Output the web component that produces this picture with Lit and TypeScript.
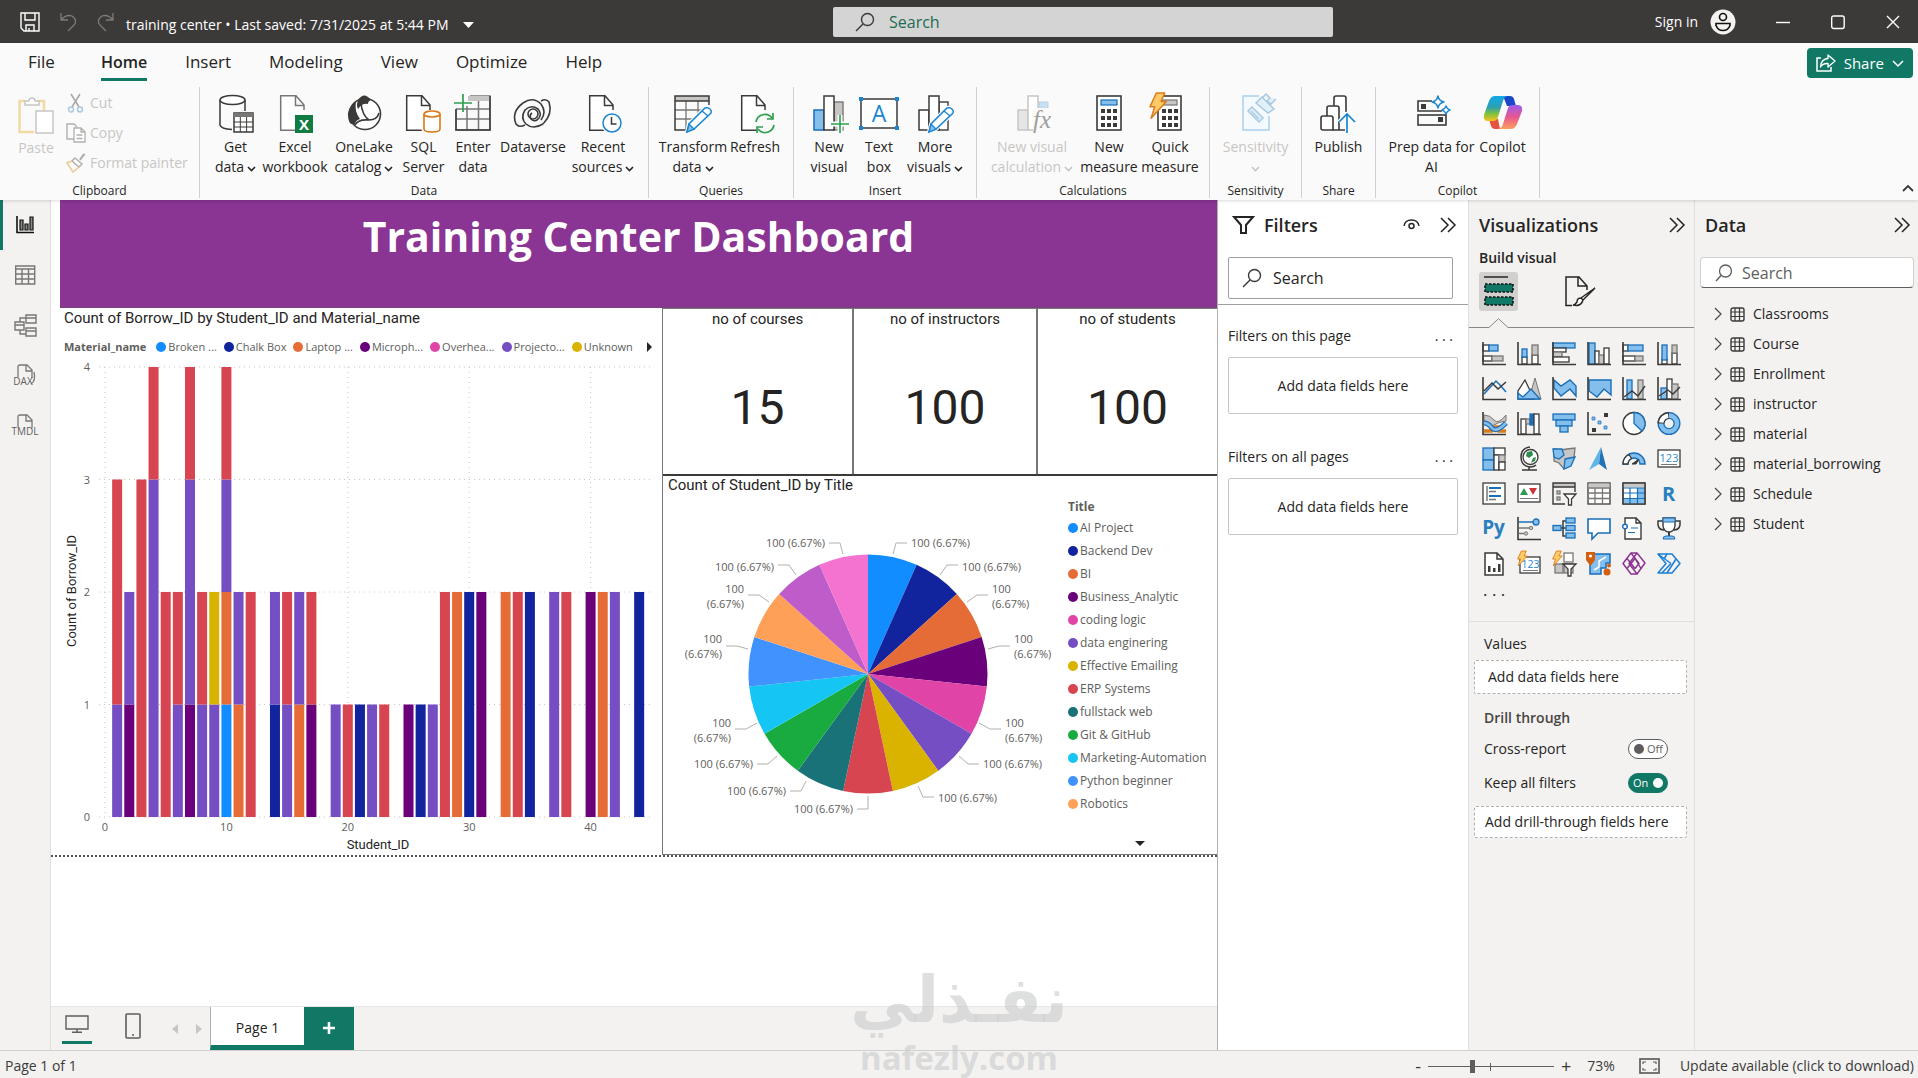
import { LitElement, html, svg, css, nothing } from "lit";
import { customElement, state } from "lit/decorators.js";

/* ---------- palette ---------- */
const K = "#3b3a39";
const G = "#797775";
const LG = "#c8c6c4";
const B = "#83beec";
const D = "#1a6fb8";
const OR = "#d97b1a";

const C = {
  blue: "#118dff",
  navy: "#12239e",
  orange: "#e66c37",
  plum: "#6b007b",
  pink: "#e044a7",
  violet: "#744ec2",
  gold: "#d9b300",
  red: "#d64550",
};

/* ---------- icon helpers ---------- */
const box = (w: number, h: number, body: unknown, cls = "ic") =>
  html`<svg class=${cls} width=${w} height=${h} viewBox="0 0 ${w} ${h}" fill="none" aria-hidden="true">${body}</svg>`;

const chevDown = (c = "currentColor") =>
  box(9, 6, svg`<path d="M1 1l3.5 3.5L8 1" stroke=${c} stroke-width="1.6"/>`, "caret");
const chevRight2 = () =>
  box(17, 16, svg`<path d="M1 1l7 7-7 7M8 1l7 7-7 7" stroke="#252423" stroke-width="1.5"/>`);
const magnifier = (c = K) =>
  box(20, 20, svg`<circle cx="12.5" cy="7.5" r="6" stroke=${c} stroke-width="1.4"/><path d="M8 12l-7 7" stroke=${c} stroke-width="1.5"/>`);

const doc = (x: number, c = K) =>
  svg`<path d="M${x + 0.7} 1.7h15l8 9.5V36.3h-23z" fill="#fff"/><path d="M${x + 24} 16v-5l-8-9.3H${x + 0.7}v34.6h15M${x + 15.5} 2v9.5h8.5" stroke=${c} stroke-width="1.5"/>`;

const pencil = (x: number) =>
  svg`<g transform="translate(${x} 13)"><path d="M2 25l2-8L20 1q3-1 5 1t1 4L9 22z" fill="#fff" stroke="#fafafa" stroke-width="4"/><path d="M2 25l2-8L20 1q3-1 5 1t1 4L9 22z" fill="#fff" stroke="#1a86d0" stroke-width="1.5"/><path d="M2 25l2-8 5 5z" fill=${B} stroke="#1a86d0" stroke-width="1.3"/><path d="M17 4l6 5" stroke="#1a86d0" stroke-width="1.3"/></g>`;

const keypad = (x: number, y: number) =>
  [0, 1, 2].map((r) => [0, 1, 2].map((c) => svg`<rect x=${x + c * 6} y=${y + r * 7} width="4" height="4" fill=${K}/>`));

const bolt = (x: number, y: number, s: number) =>
  svg`<path transform="translate(${x} ${y}) scale(${s})" d="M7 0h8l-3.500 8h5L2 24l3.500-11H1z" fill="#ffc966" stroke=${OR} stroke-width="1.400" stroke-linejoin="round"/>`;

const paste = box(36, 38, svg`<path d="M7 5H1.500v31H16" stroke="#f3d9a4" stroke-width="2.500"/><path d="M20 5h6v10" stroke="#f3d9a4" stroke-width="2.500"/><path d="M7 9V5h4a3 3 0 0 1 6 0h4v4z" fill="#fff" stroke=${LG} stroke-width="1.500"/><rect x="18" y="15" width="17" height="22" fill="#fff" stroke=${LG} stroke-width="1.500"/>`);
const cut = box(18, 20, svg`<path d="M4 1l8 13M13 1L5 14" stroke="#a9a7a5" stroke-width="1.500"/><circle cx="4" cy="16.500" r="2.500" stroke="#a6c8e4" stroke-width="1.400"/><circle cx="13" cy="16.500" r="2.500" stroke="#a6c8e4" stroke-width="1.400"/>`);
const copy = box(20, 20, svg`<path d="M8 16H1V1h7l3 3" stroke="#b3b0ad" stroke-width="1.400"/><path d="M8 5h7l4 4v10H8zM15 5v4h4M10.500 12h6M10.500 15.500h6" fill="#fff" stroke="#b3b0ad" stroke-width="1.300"/>`);
const brush = box(20, 20, svg`<path d="M19 1l-5 5M9 5l7 6-3 3-7-6z" stroke="#b3b0ad" stroke-width="1.500" fill="#fff"/><path d="M6 8L1 10l6 9 6-5" stroke="#eccb98" stroke-width="1.600"/><path d="M14 7l4-6" stroke="#b3b0ad" stroke-width="2"/>`);

const I: Record<string, unknown> = {
  getData: svg`<path d="M4 6v25q1 4 12 4.500M29 6v11" stroke=${K} stroke-width="1.500"/><ellipse cx="16.500" cy="6" rx="12.500" ry="4.500" fill="#fff" stroke=${K} stroke-width="1.500"/><rect x="18" y="19" width="19" height="19" fill="#fff" stroke=${K} stroke-width="1.500"/><path d="M18 19h19v4H18z" fill=${G}/><path d="M18 28h19M18 33h19M24.300 23v15M30.600 23v15" stroke=${K}/>`,
  excel: svg`${doc(5, G)}<rect x="20" y="21" width="18" height="18" fill="#107c41"/><text x="29" y="36" font-size="15" font-weight="700" fill="#fff" text-anchor="middle">X</text>`,
  onelake: svg`<circle cx="21" cy="20" r="15.500" fill="#fff" stroke=${K} stroke-width="1.600"/><path d="M14 6q6-9 13 0-3 1-3 4-6-1-10 5-2-4 0-9z" fill=${K}/><path d="M12 8Q1 15 5 27q1 4 6 3 1-4 5-5-6-8-4-17z" fill=${K}/><path d="M17 9q1 12 8 17 8 0 10-7M11 31q3-6 14-5" stroke=${K} stroke-width="1.600"/>`,
  sql: svg`${doc(2)}<path d="M20 20v15q0 3 8 3t8-3V20" fill="#fff" stroke="#fafafa" stroke-width="4"/><path d="M20 20v15q0 3 8 3t8-3V20" fill="#fff" stroke=${OR} stroke-width="1.600"/><ellipse cx="28" cy="20" rx="8" ry="3" fill="#fff" stroke=${OR} stroke-width="1.600"/>`,
  enter: svg`<path d="M3 15v21h34V2H17M3 15h34M3 25h34M14 12v24M25.500 7v29" stroke=${G} stroke-width="1.500"/><path d="M15 2h22v5H15z" fill=${LG}/><path d="M37 2v34H3V15" stroke=${K} stroke-width="1.500"/><path d="M1 9h18M10 0v18" stroke="#2e9e4f" stroke-width="1.700"/>`,
  dataverse: svg`<g transform="translate(0 4)" stroke=${K} stroke-width="1.600"><path d="M30 26q-10 6-17 0-6-6-1-14 6-6 13-1 4 5 1 9-4 5-8 1-2-4 1-6"/><path d="M10 5Q-2 14 3 26q3 4 9 1"/><path d="M10 5q10-7 18 1 6 8 0 16"/><path d="M30 26Q40 16 36 4q-3-4-8-1"/><circle cx="20" cy="16" r="5"/></g>`,
  recent: svg`${doc(6)}<circle cx="29" cy="29" r="9" fill="#fff" stroke="#fafafa" stroke-width="4"/><circle cx="29" cy="29" r="9" fill="#fff" stroke="#1a86d0" stroke-width="1.500"/><path d="M28.500 23v7h5" stroke=${K} stroke-width="1.500"/>`,
  transform: svg`<rect x="2" y="2" width="34" height="5" fill=${LG}/><path d="M2 16h30M2 25h20M13 7v29M25 7v18" stroke=${G} stroke-width="1.300"/><path d="M14 36H2V2h34v9M2 7h34" stroke=${K} stroke-width="1.500"/>${pencil(12)}`,
  refresh: svg`${doc(6)}<circle cx="30" cy="29" r="11" fill="#fafafa"/><path d="M21 28a9 9 0 0 1 16-4M38 19v6h-6M39 31a9 9 0 0 1-16 4M22 39v-6h6" stroke="#2e9e4f" stroke-width="1.700"/>`,
  newVisual: svg`<rect x="5" y="16" width="10" height="20" fill=${B} stroke=${D} stroke-width="1.500"/><rect x="25" y="8" width="9" height="28" fill=${LG} stroke=${G} stroke-width="1.400"/><rect x="15" y="2" width="10" height="34" fill="#fff" stroke=${K} stroke-width="1.500"/><path d="M22 30h18M31 21v18" stroke="#fafafa" stroke-width="5"/><path d="M22 30h18M31 21v18" stroke="#2e9e4f" stroke-width="1.600"/>`,
  textBox: svg`<rect x="2" y="5" width="36" height="29" fill="#fff" stroke=${K} stroke-width="1.500"/><path d="M0 3h4v4H0zM36 3h4v4h-4zM0 32h4v4H0zM36 32h4v4h-4z" fill="#1a86d0"/><text x="20" y="28" font-size="23" fill="#1a86d0" text-anchor="middle">A</text>`,
  moreVisuals: svg`<rect x="4" y="16" width="10" height="20" fill="#fff" stroke=${K} stroke-width="1.500"/><rect x="24" y="8" width="9" height="28" fill="#fff" stroke=${K} stroke-width="1.400"/><rect x="14" y="2" width="10" height="34" fill="#fff" stroke=${K} stroke-width="1.500"/>${pencil(12)}`,
  visualCalc: svg`<g><rect x="6" y="16" width="10" height="20" fill="#e8e6e4" stroke=${LG} stroke-width="1.500"/><path d="M27 8h9v6h-9z" fill="#c9dff0" stroke="#b4d2ea"/><rect x="16" y="2" width="10" height="34" fill="#fff" stroke=${LG} stroke-width="1.500"/><rect x="21" y="14" width="20" height="24" fill="#fafafa"/><text class="fx" x="21" y="34" font-size="25" font-style="italic" fill="#a19f9d">fx</text></g>`,
  measure: svg`<rect x="8" y="2" width="24" height="34" fill="#fff" stroke=${K} stroke-width="1.600"/><rect x="12" y="6" width="16" height="5" fill=${B} stroke=${D} stroke-width="1.200"/>${keypad(12, 15)}`,
  quick: svg`<rect x="8" y="2" width="23" height="34" fill="#fff" stroke=${K} stroke-width="1.600"/><rect x="12" y="6" width="15" height="5" fill=${LG} stroke=${G} stroke-width="1.200"/>${keypad(12, 15)}${bolt(-1, -1, 1.05)}`,
  sensitivity: svg`<path d="M23 2H7v34h26V22" fill="#f4f9fd" stroke="#a9d0ec" stroke-width="1.500"/><g stroke="#a9c9e2" stroke-width="1.500" fill="#e1eff9"><path d="M12 17l4-4 11 11-4 4z"/><path d="M15 17l8 8" /><path d="M20 9l6-6 12 12-6 4zM27 3l3-3 4 4-3 3 4 3 5-5"/></g>`,
  publish: svg`<g stroke=${K} stroke-width="1.600" fill="#fff"><path d="M15 12V4q0-2 2-2h8q2 0 2 2v14"/><path d="M8 22v-8q0-2 2-2h8q2 0 2 2v22"/><path d="M2 24q0-2 2-2h8q2 0 2 2v12H4q-2 0-2-2z"/></g><path d="M14 36h12" stroke=${K} stroke-width="1.500"/><path d="M28 39V20M20 28l8-8 8 8" stroke="#fafafa" stroke-width="4"/><path d="M28 39V20M20 28l8-8 8 8" stroke="#1a86d0" stroke-width="1.700"/>`,
  prep: svg`<path d="M20 7H6v10h24" stroke=${K} stroke-width="1.600"/><path d="M9 10h5v5H9z" fill=${K}/><rect x="6" y="21" width="28" height="10" stroke=${K} stroke-width="1.600"/><path d="M26 23h5v5h-5z" fill=${K}/><path d="M26 2q1 5 6 6-5 1-6 6-1-5-6-6 5-1 6-6zM34 12q1 3 4 4-3 1-4 4-1-3-4-4 3-1 4-4z" stroke="#1a86d0" stroke-width="1.400" stroke-linejoin="round"/>`,
  copilot: svg`<defs><linearGradient id="ca" x1="0" y1="0" x2="0" y2="1"><stop offset="0" stop-color="#0fa8e8"/><stop offset=".45" stop-color="#2e9fb0"/><stop offset=".7" stop-color="#7cc142"/><stop offset="1" stop-color="#f6c318"/></linearGradient><linearGradient id="cb" x1="0" y1="0" x2="0" y2="1"><stop offset="0" stop-color="#9a5cf0"/><stop offset=".5" stop-color="#e9568f"/><stop offset="1" stop-color="#fba05c"/></linearGradient></defs><path d="M20 2h7q3 0 4 3l2 7h-9z" fill="#1b48c8"/><path d="M17 35h-5q-3 0-4-3l-2-7h9z" fill="#e5533c"/><path d="M12 2h12q-3 1-4 5l-5 16q-1 4-5 4H5q-5 0-4-6L6 7q2-5 6-5z" fill="url(#ca)"/><path d="M28 35H15q4-1 5-5l5-16q1-3 5-3h5q5 0 4 6l-5 13q-2 5-6 5z" fill="url(#cb)"/>`,
};

interface Cmd { icon: string; lines: string[]; w: number; drop?: boolean; off?: boolean }
interface Group { name: string; w: number; cmds: Cmd[] }

const GROUPS: Group[] = [
  { name: "Data", w: 449, cmds: [
    { icon: "getData", lines: ["Get", "data"], w: 49, drop: true },
    { icon: "excel", lines: ["Excel", "workbook"], w: 70 },
    { icon: "onelake", lines: ["OneLake", "catalog"], w: 68, drop: true },
    { icon: "sql", lines: ["SQL", "Server"], w: 51 },
    { icon: "enter", lines: ["Enter", "data"], w: 48 },
    { icon: "dataverse", lines: ["Dataverse"], w: 72 },
    { icon: "recent", lines: ["Recent", "sources"], w: 68, drop: true },
  ] },
  { name: "Queries", w: 145, cmds: [
    { icon: "transform", lines: ["Transform", "data"], w: 68, drop: true },
    { icon: "refresh", lines: ["Refresh"], w: 56 },
  ] },
  { name: "Insert", w: 183, cmds: [
    { icon: "newVisual", lines: ["New", "visual"], w: 48 },
    { icon: "textBox", lines: ["Text", "box"], w: 52 },
    { icon: "moreVisuals", lines: ["More", "visuals"], w: 60, drop: true },
  ] },
  { name: "Calculations", w: 233, cmds: [
    { icon: "visualCalc", lines: ["New visual", "calculation"], w: 92, drop: true, off: true },
    { icon: "measure", lines: ["New", "measure"], w: 62 },
    { icon: "quick", lines: ["Quick", "measure"], w: 60 },
  ] },
  { name: "Sensitivity", w: 92, cmds: [{ icon: "sensitivity", lines: ["Sensitivity", ""], w: 76, drop: true, off: true }] },
  { name: "Share", w: 74, cmds: [{ icon: "publish", lines: ["Publish"], w: 56 }] },
  { name: "Copilot", w: 164, cmds: [
    { icon: "prep", lines: ["Prep data for", "AI"], w: 90 },
    { icon: "copilot", lines: ["Copilot"], w: 52 },
  ] },
];

/* ---------- visual gallery icons, 24 x 24 ---------- */
const ax = svg`<path d="M1 0v22.500h23" stroke=${K} stroke-width="1.600"/>`;
const r = (x: number, y: number, w: number, h: number, f: string, s: string) =>
  svg`<rect x=${x} y=${y} width=${w} height=${h} fill=${f} stroke=${s} stroke-width="1.300"/>`;
const W = "#fff";
const GALLERY: [string, unknown][] = [
  ["Stacked bar chart", svg`${r(1, 3, 6, 6, W, K)}${r(7, 3, 9, 6, B, D)}${r(1, 14, 9, 5, W, K)}${r(10, 14, 11, 5, LG, G)}${ax}`],
  ["Stacked column chart", svg`${r(5, 15, 5, 7, W, K)}${r(5, 7, 5, 8, B, D)}${r(15, 13, 6, 9, W, K)}${r(15, 3, 6, 10, LG, G)}${ax}`],
  ["Clustered bar chart", svg`${r(1, 1, 22, 5, B, D)}${r(1, 6, 13, 4, W, K)}${r(1, 10, 9, 5, LG, G)}${r(1, 15, 16, 5, W, K)}${ax}`],
  ["Clustered column chart", svg`${r(2, 1, 6, 21, B, D)}${r(8, 9, 4, 13, W, K)}${r(12, 13, 5, 9, LG, G)}${r(17, 6, 5, 16, W, K)}${ax}`],
  ["100% stacked bar chart", svg`${r(1, 3, 5, 6, W, K)}${r(6, 3, 15, 6, B, D)}${r(1, 14, 12, 5, W, K)}${r(13, 14, 8, 5, LG, G)}${ax}`],
  ["100% stacked column chart", svg`${r(5, 17, 5, 5, W, K)}${r(5, 3, 5, 15, B, D)}${r(15, 11, 5, 11, W, K)}${r(15, 3, 5, 8, LG, G)}${ax}`],
  ["Line chart", svg`<path d="M2 17L14 4l4 4 6 7" stroke=${D} stroke-width="1.500"/><path d="M2 14l8-8 6 6 8-7" stroke=${K} stroke-width="1.500"/>${ax}`],
  ["Area chart", svg`<path d="M12 22L18 1l6 21z" fill=${LG} stroke=${G}/><path d="M1 22V14L8 3l9 19z" fill=${W} stroke=${K} stroke-width="1.300"/><path d="M1 22v-6l5 4 8-8 9 10z" fill=${B} stroke=${D} stroke-width="1.300"/>`],
  ["Stacked area chart", svg`<path d="M2 3l7 6 9-6 6 6v10l-6-7-9 7-7-8z" fill=${B} stroke=${D} stroke-width="1.400"/>${ax}`],
  ["100% stacked area chart", svg`<path d="M2 3h22v15l-7-6-7 8-8-6z" fill=${B} stroke=${D} stroke-width="1.400"/>${ax}`],
  ["Line and stacked column chart", svg`${r(5, 3, 5, 19, B, D)}${r(16, 3, 5, 19, LG, G)}<path d="M2 20l8-6 6 5 7-10" stroke=${K} stroke-width="1.400"/>${ax}`],
  ["Line and clustered column chart", svg`${r(4, 11, 6, 11, B, D)}${r(10, 2, 5, 20, W, K)}${r(15, 7, 6, 15, LG, G)}<path d="M2 19l9-6 5 4 7-7" stroke=${K} stroke-width="1.400"/>${ax}`],
  ["Ribbon chart", svg`<path d="M2 3q6 0 10 5t12-5v6q-8 1-12 4T2 8z" fill=${LG} stroke=${G}/><path d="M2 19h7v-4h8v4h7" stroke=${OR} stroke-width="3.500"/><path d="M2 11q4 0 8 5t14-5" stroke=${D} stroke-width="5"/><path d="M2 11q4 0 8 5t14-5" stroke=${B} stroke-width="2.500"/>${ax}`],
  ["Waterfall chart", svg`${r(4, 7, 5, 15, W, K)}${r(9, 7, 4, 5, LG, G)}${r(13, 2, 4, 11, D, D)}${r(17, 2, 5, 20, W, K)}${ax}`],
  ["Funnel", svg`${r(1, 2, 22, 6, B, D)}${r(4, 8, 16, 6, B, D)}${r(8, 14, 8, 6, B, D)}`],
  ["Scatter chart", svg`<path d="M17 1h4v4h-4zM5 16h4v4H5z" fill=${K}/><path d="M5 5h3v3H5zM11 9h3v3h-3zM17 14h3v3h-3z" fill=${B} stroke=${D} stroke-width=".7"/>${ax}`],
  ["Pie chart", svg`<circle cx="12" cy="11.500" r="11" fill=${W} stroke=${K} stroke-width="1.400"/><path d="M12 .5a11 11 0 0 1 8 18.500L12 11.500z" fill=${B} stroke=${D} stroke-width="1.300"/>`],
  ["Donut chart", svg`<circle cx="12" cy="11.500" r="8" stroke=${D} stroke-width="7"/><circle cx="12" cy="11.500" r="8" stroke=${B} stroke-width="4.500"/><path d="M4 11.500a8 8 0 0 1 8-8" stroke=${K} stroke-width="7"/><path d="M4.200 10.500a8 8 0 0 1 7-6.800" stroke=${W} stroke-width="4.500"/>`],
  ["Treemap", svg`${r(1, 1, 11, 12, B, D)}${r(1, 13, 11, 10, B, D)}${r(12, 1, 11, 7, W, K)}${r(12, 8, 5, 15, W, K)}${r(17, 8, 6, 7, LG, G)}${r(17, 15, 6, 8, W, K)}`],
  ["Map", svg`<circle cx="13.500" cy="10" r="7.500" fill=${W} stroke=${K} stroke-width="1.300"/><path d="M10 5l5-1 1 4-4 3-3-2zM16 11l3-1-1 4-4 2z" fill="#2c8c4b"/><path d="M13 0Q4 1 4 10t9 10q4 0 6-2M12 20v3M5 23h15" stroke=${K} stroke-width="1.500"/>`],
  ["Filled map", svg`<path d="M2 2l7 1 6-1 8-1-1 10-4 8-6 3-5-6-5-2z" fill=${LG} stroke=${G} stroke-width="1.300"/><path d="M1 2h9l2 6-5 4-5-2zM13 12l10-2-4 9-7 3z" fill=${B} stroke=${D} stroke-width="1.300"/>`],
  ["Azure map", svg`<path d="M14 0L2 23l10-6z" fill="#5fb4ea"/><path d="M14 0l6 23-8-6z" fill="#2273b5"/>`],
  ["Gauge", svg`<path d="M1 17a11 11 0 0 1 22 0h-5a6 6 0 0 0-12 0z" fill=${B} stroke=${D} stroke-width="1.400"/><path d="M1 17a11 11 0 0 1 6-9.500l2.500 4A6 6 0 0 0 6 17z" fill=${W} stroke=${K} stroke-width="1.300"/><path d="M10 17l7-5-3 5z" fill=${K} stroke=${K}/>`],
  ["Card", svg`${r(1, 3, 22, 17, W, K)}<text x="12" y="14.500" font-size="11" fill="#2a8ad0" text-anchor="middle">123</text><path d="M4 17.500h16" stroke=${G}/>`],
  ["Multi-row card", svg`${r(1, 1, 22, 21, W, K)}<path d="M5 4v15" stroke=${G} stroke-width="1.500"/><path d="M7 6h12M7 14h12" stroke=${D} stroke-width="2.200"/><path d="M7 9.500h7M7 17.500h7" stroke=${G} stroke-width="1.300"/>`],
  ["KPI", svg`${r(1, 2, 22, 18, W, K)}<path d="M3 13l4-7 4 7z" fill="#2c9c50"/><path d="M12 6h8l-4 7z" fill="#d13438"/><path d="M3 16.500h18" stroke=${G}/>`],
  ["Slicer", svg`<path d="M1 1h22v4H1z" fill=${LG}/><path d="M13 22H1V1h22v9M1 5h22" stroke=${K} stroke-width="1.400"/>${r(5, 9, 3, 3, LG, G)}${r(5, 15, 3, 3, LG, G)}<path d="M12 12h12l-4.500 5v6h-3v-6z" fill=${W} stroke=${K} stroke-width="1.300"/>`],
  ["Table", svg`${r(1, 1, 22, 21, W, K)}<path d="M1.500 1.500h21v4h-21z" fill=${LG}/><path d="M1 6h22M1 11h22M1 16.500h22M8 6v16M15.500 6v16" stroke=${G} stroke-width="1.300"/>`],
  ["Matrix", svg`${r(1, 1, 22, 21, W, K)}<path d="M1.500 1.500h21v4h-21z" fill=${LG}/><path d="M15.500 6H22v16H2v-5.500h13.500z" fill=${B}/><path d="M1 6h22M1 11h22M1 16.500h22M8 6v16M15.500 6v16" stroke=${D} stroke-width="1.200"/>${r(1, 1, 22, 21, "none", K)}`],
  ["R script visual", svg`<text x="11.500" y="19" font-size="20" font-weight="700" fill="#2a7fbf" text-anchor="middle">R</text>`],
  ["Python visual", svg`<text x="11.500" y="17" font-size="19" font-weight="700" fill="#2a7fbf" text-anchor="middle">Py</text>`],
  ["Key influencers", svg`<path d="M2 5h16" stroke=${D} stroke-width="1.500"/><circle cx="19" cy="5" r="3" fill=${B} stroke=${D} stroke-width="1.300"/><path d="M2 11h10M2 16.500h5" stroke=${G} stroke-width="1.500"/><circle cx="14" cy="11" r="1.700" fill=${LG} stroke=${G}/><circle cx="9" cy="16.500" r="1.700" fill=${LG} stroke=${G}/>${ax}`],
  ["Decomposition tree", svg`<path d="M8 11h7M14 4h-3v15h3M11 11h4" stroke=${K} stroke-width="1.500"/>${r(1, 8.5, 8, 5, B, D)}${r(14, 1, 9, 5, B, D)}${r(14, 8.5, 9, 5, B, D)}${r(14, 16, 9, 5, B, D)}`],
  ["Q&A", svg`<path d="M1 2h22v14H11l-6 6v-6H1z" fill=${W} stroke=${D} stroke-width="1.600"/>`],
  ["Narrative", svg`<path d="M3 7V1h11l5 5v16H3V12M14 1v5h5" fill=${W} stroke=${K} stroke-width="1.400"/><circle cx="3" cy="9.500" r="2.300" fill=${W} stroke=${D} stroke-width="1.400"/><path d="M9 11h7M6 15.500h7" stroke=${D} stroke-width="1.200"/>`],
  ["Metrics", svg`<path d="M6 4H1v4q1 5 6 5M18 4h5v4q-1 5-6 5" stroke=${K} stroke-width="1.500"/><path d="M6 1h12v8q-1 6-6 6T6 9z" fill=${W} stroke=${K} stroke-width="1.400"/><path d="M6 1h12v4H6z" fill=${B} stroke=${D}/><path d="M12 15v4" stroke=${K} stroke-width="2"/><path d="M6 22q0-3 3-3h6q3 0 3 3z" fill=${B} stroke=${D}/>`],
  ["Paginated report", svg`<path d="M3 1h12l6 6v16H3zM15 1v6h6" fill=${W} stroke=${K} stroke-width="1.500"/><path d="M6 14h2.500v6H6zM11 16h2.500v4H11zM16 12h2.500v8H16z" fill=${K}/>`],
  ["Card (new)", svg`${r(3, 5, 20, 16, W, K)}<text x="13.500" y="16" font-size="10.500" fill="#2a8ad0" text-anchor="middle">123</text><path d="M6 18.500h15" stroke=${G}/>${bolt(0, -1, 0.62)}`],
  ["Slicer (new)", svg`${r(12, 1, 9, 9, W, G)}${r(3, 12, 8, 9, LG, G)}${r(12, 12, 9, 9, LG, G)}<path d="M11 12h13l-5 5v7h-3v-7z" fill=${W} stroke=${K} stroke-width="1.300"/>${bolt(0, -1, 0.62)}`],
  ["ArcGIS map", svg`<path d="M3 2h20v9h-4v5h-5v6H3z" fill=${B} stroke=${D} stroke-width="1.500"/><path d="M7 18l5-3V9l7-4" stroke=${W} stroke-width="1.500"/><path d="M-1 0h9v8l-4.500 6L-1 8z" fill="#d35f0c"/><circle cx="3.500" cy="4" r="1.600" fill=${W}/><circle cx="20" cy="20" r="3.500" fill="#d35f0c"/><circle cx="22" cy="13.500" r="2" fill="#d35f0c"/>`],
  ["Power Apps", svg`<g stroke="#8a2f8f" stroke-width="1.400" stroke-linejoin="round"><path d="M9 1h6l8 10-8 11H9L1 11.500z"/><path d="M9 1l8 10.500-4 5L5 6.500M15 22L7 11.500l8-10.500M5 16.500L13 6.500l6 10"/></g>`],
  ["Power Automate", svg`<g stroke="#1a7fd4" stroke-width="1.500" stroke-linejoin="round"><path d="M1 2h14l8 9.500L15 21H1l8-9.500z"/><path d="M1 2l13 9.500M14 11.500L5 21M10 2l-3 5M19 7l-9 14"/></g>`],
];

/* ---------- chart data ---------- */
type Stack = [number, [keyof typeof C, number][]];
const STACKS: Stack[] = [
  [1, [["violet", 1], ["red", 2]]], [2, [["plum", 1], ["violet", 1]]], [3, [["red", 3]]],
  [4, [["violet", 3], ["red", 1]]], [5, [["red", 2]]], [6, [["violet", 1], ["red", 1]]],
  [7, [["plum", 1], ["violet", 2], ["red", 1]]], [8, [["violet", 1], ["red", 1]]],
  [9, [["violet", 1], ["gold", 1]]], [10, [["blue", 1], ["orange", 1], ["violet", 1], ["red", 1]]],
  [11, [["orange", 1], ["violet", 1]]], [12, [["red", 2]]], [14, [["navy", 1], ["violet", 1]]],
  [15, [["violet", 1], ["red", 1]]], [16, [["orange", 1], ["violet", 1]]], [17, [["plum", 1], ["red", 1]]],
  [19, [["violet", 1]]], [20, [["red", 1]]], [21, [["navy", 1]]], [22, [["violet", 1]]], [23, [["red", 1]]],
  [25, [["plum", 1]]], [26, [["navy", 1]]], [27, [["violet", 1]]], [28, [["red", 2]]], [29, [["orange", 2]]],
  [30, [["navy", 2]]], [31, [["plum", 2]]], [33, [["orange", 2]]], [34, [["red", 2]]], [35, [["navy", 2]]],
  [37, [["violet", 2]]], [38, [["red", 2]]], [40, [["plum", 2]]], [41, [["orange", 2]]], [42, [["violet", 2]]],
  [44, [["navy", 2]]],
];
const MATERIALS: [string, string][] = [
  ["Broken ...", C.blue], ["Chalk Box", C.navy], ["Laptop ...", C.orange], ["Microph...", C.plum],
  ["Overhea...", C.pink], ["Projecto...", C.violet], ["Unknown", C.gold],
];
const COURSES: [string, string][] = [
  ["AI Project", C.blue], ["Backend Dev", C.navy], ["BI", C.orange], ["Business_Analytic", C.plum],
  ["coding logic", C.pink], ["data enginering", C.violet], ["Effective Emailing", C.gold], ["ERP Systems", C.red],
  ["fullstack web", "#197278"], ["Git & GitHub", "#1aab40"], ["Marketing-Automation", "#15c6f4"],
  ["Python beginner", "#4092ff"], ["Robotics", "#ffa058"],
];
const SLICES = [...COURSES.map((c) => c[1]), "#be5dc9", "#f472d0"];

/* callouts: start, elbow, reach, text baseline, wrapped */
type Callout = [number, number, number, number, number, number, boolean];
const RIGHT: Callout[] = [
  [25, -120, 28, -131, 39, -127, false], [72, -99, 79, -109, 90, -103, false], [99, -72, 109, -79, 120, -81, true],
  [120, -25, 131, -28, 142, -31, true], [111, 49, 122, 55, 133, 53, true],
];
const CALLOUTS: Callout[] = [
  ...RIGHT,
  [91, 82, 100, 90, 111, 94, false], [50, 112, 55, 123, 66, 128, false], [0, 122, 0, 135, -11, 139, false],
  [-62, 107, -67, 117, -78, 121, false], [-91, 82, -100, 90, -111, 94, false],
  ...RIGHT.map(([a, b, c, d, e, f, g]): Callout => [-a, b, -c, d, -e, f, g]),
];

const TABLES = ["Classrooms", "Course", "Enrollment", "instructor", "material", "material_borrowing", "Schedule", "Student"];

@customElement("app-root")
export class AppRoot extends LitElement {
  @state() private cross = false;
  @state() private keep = true;

  static styles = css`
    :host { display: flex; flex-direction: column; min-height: 100vh; position: relative; background: #f3f2f1; color: #252423; font: 14px/20px "Open Sans", "Noto Sans", sans-serif; }
    * { box-sizing: border-box; }
    button, input { font: inherit; color: inherit; }
    button { background: none; border: 0; padding: 0; margin: 0; text-align: inherit; }
    ul, h1, h2, h3, p { margin: 0; padding: 0; list-style: none; font-weight: inherit; font-size: inherit; }
    a { color: inherit; text-decoration: none; }
    svg { display: block; flex: none; overflow: visible; }
    svg text { font-family: "Open Sans", sans-serif; }
    svg .din { font-family: Roboto, "Open Sans", sans-serif; }
    svg .fx { font-family: "Liberation Serif", serif; }

    .titlebar { height: 43px; background: #3b3a39; color: #fff; display: grid; grid-template-columns: 833fr 500px 585fr; align-items: center; }
    .tb-left { display: flex; align-items: center; padding-left: 20px; gap: 20px; }
    .doc-name { display: flex; align-items: center; gap: 14px; padding-top: 6px; margin-left: -8px; white-space: nowrap; }
    .tb-search { height: 30px; background: #d4d4d4; border-radius: 2px; display: flex; align-items: center; padding-left: 22px; gap: 14px; font-size: 16px; color: #1e6b52; }
    .field { flex: 1; min-width: 0; border: 0; outline: 0; background: none; padding: 0; }
    .field::placeholder { color: inherit; opacity: 1; }
    .tb-right { display: flex; align-items: center; justify-content: flex-end; padding-right: 18px; }
    .signin { display: flex; align-items: center; gap: 12px; margin-right: 40px; }
    .win { display: flex; gap: 41px; }

    .ribbon { height: 157px; background: #fafafa; display: flex; flex-direction: column; box-shadow: 0 1px 3px rgba(0,0,0,.15); position: relative; }
    .tabs { display: flex; align-items: flex-start; padding: 5px 5px 0 28px; font-size: 17px; height: 44px; }
    .tabs nav { display: flex; gap: 38px; flex: 1; }
    .tab { height: 33px; border-bottom: 3px solid transparent; padding-bottom: 3px; }
    .tab:first-child { margin-right: 8px; }
    .tab-on { font-weight: 600; border-color: #117865; font-size: 16px; }
    .share { height: 30px; background: #117865; color: #fff; border-radius: 4px; display: flex; align-items: center; gap: 8px; padding: 0 9px; font-size: 15px; }
    .groups { display: flex; height: 111px; position: relative; }
    .group { display: flex; flex-direction: column; justify-content: space-between; border-right: 1px solid #d2d0ce; height: 111px; }
    .group-name { text-align: center; font-size: 12px; line-height: 14px; }
    .cmds { display: flex; justify-content: center; padding-top: 7px; }
    .cmd { display: flex; flex-direction: column; align-items: center; white-space: nowrap; }
    .cmd svg { margin-bottom: 3px; }
    .cmd .line { display: flex; align-items: center; gap: 3px; height: 20px; }
    .cmd .line svg { margin: 3px 0 0; }
    .off { color: #c8c6c4; }
    .clip { display: flex; width: 199px; padding: 9px 0 0 18px; gap: 12px; }
    .clip-list { display: flex; flex-direction: column; gap: 10px; margin-top: -3px; }
    .clip-item { display: flex; align-items: center; gap: 4px; height: 20px; }
    .clip-item svg { width: 20px; }
    .paste { display: flex; flex-direction: column; align-items: center; gap: 4px; }
    .collapse { margin: auto 4px 6px auto; }

    .main { flex: 1; display: flex; min-height: 0; }
    .rail { width: 51px; border-right: 1px solid #e1dfdd; display: flex; flex-direction: column; }
    .rail button { height: 50px; display: grid; place-items: center; border-left: 3px solid transparent; padding-right: 3px; }
    .rail .rail-on { border-color: #117865; }
    .stage { flex: 1; min-width: 0; display: flex; flex-direction: column; border-right: 1px solid #b3b0ad; }
    .canvas { flex: 1; background: #fff; }
    .page { padding-left: 9px; border-bottom: 2px dotted #555; }
    .banner { height: 108px; background: #8a3493; color: #fff; font-size: 41px; line-height: 56px; font-weight: 700; text-align: center; padding-top: 8px; border-bottom: 1px solid #79427f; }
    .visuals { display: grid; grid-template-columns: minmax(0, 602fr) minmax(0, 555fr); }
    .din { font-family: Roboto, "Open Sans", sans-serif; }
    .v-title { font-size: 15px; line-height: 20px; }
    .bars { padding-left: 4px; }
    .chart { width: 100%; height: auto; }
    .legend { display: flex; align-items: center; gap: 7px; font-size: 11px; color: #605e5c; height: 20px; margin: 9px 10px 3px 0; white-space: nowrap; }
    .legend b { margin-right: 3px; }
    .key { display: flex; align-items: center; gap: 2px; }
    .dot { width: 10px; height: 10px; border-radius: 50%; }
    .next { margin-left: auto; }
    .right { border-left: 1px solid #797775; display: flex; flex-direction: column; border-top: 1px solid #797775; }
    .cards { display: grid; grid-template-columns: 191fr 184fr 179fr; height: 167px; border-bottom: 2px solid #3b3a39; }
    .card { text-align: center; border-right: 2px solid #797775; font-size: 15px; }
    .card:last-child { border-right: 0; }
    .num { font-size: 48px; line-height: 60px; margin-top: 49px; color: #252423; }
    .pie { padding-left: 5px; flex: 1; border-bottom: 1px solid #797775; }
    .pie .v-title { line-height: 18px; }
    .pie-body { display: flex; }
    .pie-chart { flex: 1; min-width: 0; padding-top: 20px; }
    .pie-legend { width: 149px; font-size: 12px; color: #605e5c; display: flex; flex-direction: column; }
    .pie-legend h3 { font-weight: 700; line-height: 18px; padding-top: 4px; font-size: 12px; }
    .pie-legend li { display: flex; align-items: center; gap: 2px; height: 23px; white-space: nowrap; }
    .down { margin: 26px 0 0 67px; }

    .page-tabs { height: 44px; display: flex; align-items: stretch; border-top: 1px solid #e8e6e4; }
    .view { width: 52px; display: flex; flex-direction: column; align-items: center; justify-content: flex-end; gap: 8px; padding-bottom: 6px; }
    .view-on::after { content: ""; width: 30px; height: 3px; background: #117865; }
    .phone { width: 60px; display: grid; place-items: center; padding-bottom: 6px; }
    .nav-arrow { width: 24px; display: grid; place-items: center; }
    .page-tab { width: 94px; margin-left: -1px; background: #fff; border-bottom: 5px solid #117865; border-left: 1px solid #b3b0ad; text-align: center; padding-top: 4px; }
    .add { width: 50px; background: #117865; display: grid; place-items: center; padding-bottom: 2px; }

    .pane { display: flex; flex-direction: column; }
    .pane-head { display: flex; align-items: center; height: 50px; gap: 11px; }
    .pane-head h2 { font-size: 18px; font-weight: 600; flex: 1; }
    .filters { width: 251px; background: #fff; border-right: 1px solid #e1dfdd; }
    .filters .pane-head { padding: 0 11px 0 15px; gap: 20px; }
    .filters .pane-head h2 { margin-left: -10px; }
    .f-search { margin: 7px 15px 5px 10px; height: 42px; border: 1px solid #a19f9d; border-radius: 2px; display: flex; align-items: center; gap: 11px; padding-left: 13px; font-size: 16px; }
    .f-list { border-top: 1px solid #a19f9d; padding: 17px 10px 0 10px; }
    .f-head { display: flex; justify-content: space-between; padding-right: 5px; line-height: 28px; }
    .f-drop { height: 57px; border: 1px solid #c8c6c4; border-radius: 2px; display: grid; place-items: center; margin: 7px 0 29px; }

    .viz { width: 226px; border-right: 1px solid #e1dfdd; }
    .viz .pane-head { padding: 0 8px 0 10px; }
    .sub { font-weight: 600; padding-left: 10px; line-height: 16px; padding-bottom: 2px; }
    .modes { display: flex; gap: 43px; padding: 4px 0 0 10px; position: relative; height: 60px; border-bottom: 1px solid #8a8886; }
    .mode { width: 39px; height: 39px; display: grid; place-items: center; border-radius: 3px; }
    .mode-on { background: #d2d0ce; }
    .notch { position: absolute; left: 20px; bottom: -1px; }
    .gallery { display: grid; grid-template-columns: repeat(6, 24px); gap: 11px; padding: 14px 0 0 13px; }
    .dots { font-size: 17px; line-height: 20px; padding: 4px 0 0 14px; height: 46px; border-bottom: 1px solid #e1dfdd; }
    .wells { padding: 12px 7px 0 5px; }
    .label { padding-left: 10px; line-height: 20px; }
    .well { border: 1px dashed #b3b0ad; background: #fff; border-radius: 2px; height: 34px; display: flex; align-items: center; padding-left: 13px; margin: 6px 0 14px; white-space: nowrap; }
    .well-tight { padding-left: 10px; height: 32px; margin-top: 6px; }
    .semi { font-weight: 600; color: #484644; }
    .row { display: flex; align-items: center; justify-content: space-between; padding: 0 19px 0 10px; height: 34px; }
    .row-first { margin-top: 4px; }
    .switch { display: grid; align-items: center; }
    .switch input, .switch span { grid-area: 1 / 1; }
    .switch input { appearance: none; margin: 0; width: 40px; height: 20px; border: 1px solid #605e5c; border-radius: 10px; background: #fff; display: flex; align-items: center; padding: 0 5px; }
    .switch input::before { content: ""; width: 10px; height: 10px; border-radius: 50%; background: #605e5c; }
    .switch input:checked { background: #117865; border-color: #117865; justify-content: flex-end; padding: 0 4px; }
    .switch input:checked::before { background: #fff; }
    .switch span { font-size: 11px; text-align: right; padding-right: 5px; color: #605e5c; pointer-events: none; z-index: 1; }
    .switch .on { text-align: left; padding-left: 5px; color: #fff; }

    .data { width: 223px; }
    .data .pane-head { padding: 0 7px 0 10px; }
    .d-search { margin: 7px 4px 11px 5px; height: 31px; background: #fff; border: 1px solid #d2d0ce; border-bottom-color: #605e5c; border-radius: 4px; display: flex; align-items: center; gap: 9px; padding-left: 14px; color: #605e5c; font-size: 16px; }
    .table-row { display: flex; align-items: center; height: 30px; padding-left: 19px; gap: 8px; width: 100%; }

    .status { height: 28px; border-top: 1px solid #d2d0ce; display: flex; align-items: center; padding: 3px 4px 0 5px; color: #3b3a39; }
    .zoom { margin-left: auto; display: flex; align-items: center; font-size: 18px; gap: 7px; }
    .zoom-range { appearance: none; width: 126px; height: 15px; margin: 0; background: linear-gradient(#605e5c, #605e5c) 0 7px / 100% 1px no-repeat, linear-gradient(#605e5c, #605e5c) 62px 4px / 1px 8px no-repeat; }
    .zoom-range::-webkit-slider-thumb { appearance: none; width: 5px; height: 13px; background: #605e5c; }
    .pct { margin: 0 24px 0 16px; }
    .status .update { margin-left: 20px; }

    .mark { position: absolute; left: 0; right: 0; bottom: 0; text-align: center; color: rgba(200, 202, 202, .6); pointer-events: none; font-weight: 700; }
    .mark-ar { font-size: 64px; line-height: 76px; font-family: "DejaVu Sans", sans-serif; }
    .mark-en { font-size: 33px; line-height: 40px; }
  `;

  private titleBar() {
    return html`<header class="titlebar">
      <div class="tb-left">
        <button aria-label="Save">${box(20, 20, svg`<path d="M1 1h18v18H4l-3-3z" stroke="#fff" stroke-width="1.400"/><path d="M5 1v7h10V1M6 19v-6h8v6M9 19v-3" stroke="#fff" stroke-width="1.400"/>`)}</button>
        <button aria-label="Undo">${box(17, 20, svg`<path d="M1 1v7h7M1 8q5-6 11-4 6 4 2 9l-6 6" stroke="#7d7b79" stroke-width="1.300"/>`)}</button>
        <button aria-label="Redo">${box(17, 20, svg`<path d="M16 1v7H9M16 8q-5-6-11-4-6 4-2 9l6 6" stroke="#7d7b79" stroke-width="1.300"/>`)}</button>
        <button class="doc-name"><span>training center • Last saved: 7/31/2025 at 5:44 PM</span>${box(11, 6, svg`<path d="M0 0h11L5.500 6z" fill="#fff"/>`)}</button>
      </div>
      <label class="tb-search">${magnifier()}<input class="field" type="text" placeholder="Search" aria-label="Search" /></label>
      <div class="tb-right">
        <button class="signin">Sign in ${box(26, 26, svg`<circle cx="13" cy="13" r="12.500" fill="#f3f2f1"/><circle cx="13" cy="8" r="3.500" stroke="#111" stroke-width="1.600"/><path d="M6 14.500h14v2q-2 5-7 5t-7-5z" stroke="#111" stroke-width="1.600"/>`)}</button>
        <div class="win">
          <button aria-label="Minimize">${box(14, 14, svg`<path d="M0 7.500h14" stroke="#fff" stroke-width="1.400"/>`)}</button>
          <button aria-label="Maximize">${box(14, 14, svg`<rect x=".7" y="1" width="12.500" height="12.500" rx="2" stroke="#fff" stroke-width="1.400"/>`)}</button>
          <button aria-label="Close">${box(14, 14, svg`<path d="M1 1l12 12M13 1L1 13" stroke="#fff" stroke-width="1.400"/>`)}</button>
        </div>
      </div>
    </header>`;
  }

  private ribbon() {
    return html`<div class="ribbon">
      <div class="tabs">
        <nav>${["File", "Home", "Insert", "Modeling", "View", "Optimize", "Help"].map((t) => html`<button class="tab ${t === "Home" ? "tab-on" : ""}">${t}</button>`)}</nav>
        <button class="share">${box(20, 18, svg`<path d="M5 4H1v13h14v-4" stroke="#fff" stroke-width="1.500"/><path d="M12 1l7 6-7 6V9.500Q7 9 4.500 13 5 5 12 4.500z" stroke="#fff" stroke-width="1.400" stroke-linejoin="round"/>`)}<span>Share</span>${box(12, 7, svg`<path d="M1 1l5 5 5-5" stroke="#fff" stroke-width="1.500"/>`)}</button>
      </div>
      <div class="groups">
        <div class="group">
          <div class="clip off">
            <button class="paste" disabled>${paste}<span class="off">Paste</span></button>
            <div class="clip-list off">
              <button class="clip-item off" disabled>${cut}Cut</button>
              <button class="clip-item off" disabled>${copy}Copy</button>
              <button class="clip-item off" disabled>${brush}Format painter</button>
            </div>
          </div>
          <div class="group-name">Clipboard</div>
        </div>
        ${GROUPS.map((g) => html`<div class="group" style="width:${g.w}px">
          <div class="cmds">${g.cmds.map((c) => html`<button class="cmd ${c.off ? "off" : ""}" style="width:${c.w}px" ?disabled=${c.off}>
            ${box(40, 40, I[c.icon])}
            ${c.lines.map((l, i) => html`<span class="line">${l}${c.drop && i === c.lines.length - 1 ? chevDown() : nothing}</span>`)}
          </button>`)}</div>
          <div class="group-name">${g.name}</div>
        </div>`)}
        <button class="collapse" aria-label="Collapse ribbon">${box(12, 8, svg`<path d="M1 7l5-5 5 5" stroke=${K} stroke-width="1.800"/>`)}</button>
      </div>
    </div>`;
  }

  private rail() {
    const page = svg`<path d="M5 13V3q0-2 2-2h7l5 5v8M13 1v6h6" stroke=${G} stroke-width="1.300"/>`;
    return html`<div class="rail">
      <button class="rail-on" aria-label="Report view">${box(18, 18, svg`<path d="M1 0v16.500h17" stroke="#111" stroke-width="1.600"/><path d="M4 4h3v10H4zM9 8h3v6H9zM14 1h3v13h-3z" fill="#8a8886" stroke="#111" stroke-width="1.200"/>`)}</button>
      <button aria-label="Table view">${box(20, 20, svg`<path d="M.7 1h19v18h-19zM.7 4h19M.7 9h19M.7 14h19M7 4v15M13.500 4v15" stroke=${G} stroke-width="1.400"/>`)}</button>
      <button aria-label="Model view">${box(23, 23, svg`<path d="M12 1h10v8H12zM12 4h10M12 14h10v8H12zM12 17h10M1 8h9v8H1zM1 11h9M12 4H6v4M6 16v4h6" stroke=${G} stroke-width="1.400"/>`)}</button>
      <button aria-label="DAX query view">${box(24, 22, svg`${page}<path d="M21 8q2 9-3 12" stroke=${G} stroke-width="1.300"/><text x="10" y="21" font-size="10" fill="#605e5c" text-anchor="middle">DAX</text>`)}</button>
      <button aria-label="TMDL view">${box(24, 22, svg`${page}<text x="12" y="21" font-size="10" fill="#605e5c" text-anchor="middle">TMDL</text>`)}</button>
    </div>`;
  }

  private bars() {
    const x0 = 41, u = 12.14, y0 = 457, h = 112.5;
    return html`<section class="bars">
      <h2 class="v-title din">Count of Borrow_ID by Student_ID and Material_name</h2>
      <div class="legend"><b>Material_name</b>${MATERIALS.map(([n, c]) => html`<span class="key"><i class="dot" style="background:${c}"></i>${n}</span>`)}
        <button class="next" aria-label="Next legend items">${box(5, 10, svg`<path d="M0 0l5 5-5 5z" fill="#252423"/>`)}</button></div>
      <svg class="chart" viewBox="0 0 598 495" fill="none">
        ${[0, 1, 2, 3, 4].map((v) => svg`<path d="M${x0 - 6} ${y0 - v * h}H590" stroke="#c8c6c4" stroke-dasharray="1 4"/><text x="23" y=${y0 - v * h + 4} font-size="11" fill="#605e5c" text-anchor="middle">${v}</text>`)}
        ${[0, 10, 20, 30, 40].map((v) => svg`<path d="M${x0 + v * u} 7V${y0}" stroke="#c8c6c4" stroke-dasharray="1 4"/><text x=${x0 + v * u} y="471" font-size="11" fill="#605e5c" text-anchor="middle">${v}</text>`)}
        ${STACKS.map(([id, parts]) => {
          let at = 0;
          return parts.map(([c, n]) => {
            at += n;
            return svg`<rect x=${x0 + id * u - 5} y=${y0 - at * h} width="10" height=${n * h} fill=${C[c]}/>`;
          });
        })}
        <text class="din" x="314" y="489" font-size="13" fill="#252423" text-anchor="middle">Student_ID</text>
        <text class="din" transform="translate(12 231) rotate(-90)" font-size="13" fill="#252423" text-anchor="middle">Count of Borrow_ID</text>
      </svg>
    </section>`;
  }

  private pie() {
    const R = 119.5, n = SLICES.length;
    const pt = (i: number) => {
      const a = (i / n) * Math.PI * 2;
      return `${(R * Math.sin(a)).toFixed(2)} ${(-R * Math.cos(a)).toFixed(2)}`;
    };
    return html`<section class="pie">
      <h2 class="v-title din">Count of Student_ID by Title</h2>
      <div class="pie-body">
        <div class="pie-chart"><svg class="chart" viewBox="-200 -160 400 330" fill="none">
          ${SLICES.map((c, i) => svg`<path d="M0 0L${pt(i)}A${R} ${R} 0 0 1 ${pt(i + 1)}z" fill=${c}/>`)}
          ${CALLOUTS.map(([sx, sy, ex, ey, rx, ty, two]) => {
            const left = rx < 0;
            const tx = rx + (left ? -4 : 4);
            const anchor = left ? "end" : "start";
            return svg`<path d="M${sx} ${sy}L${ex} ${ey}H${rx}" stroke="#b3b0ad"/>
              <text x=${tx} y=${ty} font-size="11" fill="#605e5c" text-anchor=${anchor}>${two ? "100" : "100 (6.67%)"}</text>
              ${two ? svg`<text x=${tx} y=${ty + 15} font-size="11" fill="#605e5c" text-anchor=${anchor}>(6.67%)</text>` : nothing}`;
          })}
        </svg></div>
        <div class="pie-legend">
          <h3>Title</h3>
          <ul>${COURSES.map(([t, c]) => html`<li><i class="dot" style="background:${c}"></i>${t}</li>`)}</ul>
          <button class="down" aria-label="More legend items">${box(10, 5, svg`<path d="M0 0h10L5 5z" fill="#252423"/>`)}</button>
        </div>
      </div>
    </section>`;
  }

  private stage() {
    return html`<div class="stage">
      <div class="canvas"><div class="page">
        <h1 class="banner">Training Center Dashboard</h1>
        <div class="visuals">
          ${this.bars()}
          <div class="right">
            <div class="cards">${[["no of courses", "15"], ["no of instructors", "100"], ["no of students", "100"]].map(([l, v]) => html`<div class="card din"><h2>${l}</h2><p class="num">${v}</p></div>`)}</div>
            ${this.pie()}
          </div>
        </div>
      </div></div>
      <div class="page-tabs">
        <button class="view view-on" aria-label="Desktop layout">${box(24, 18, svg`<path d="M1 1h22v13H1zM12 14v3M7 17.300h10" stroke="#605e5c" stroke-width="1.400"/>`)}</button>
        <button class="phone" aria-label="Mobile layout">${box(16, 26, svg`<rect x="1" y="1" width="14" height="24" rx="1" stroke="#605e5c" stroke-width="1.600"/><path d="M7 22h2" stroke="#605e5c" stroke-width="1.500"/>`)}</button>
        <button class="nav-arrow" aria-label="Previous page">${box(6, 10, svg`<path d="M6 0v10L0 5z" fill="#c8c6c4"/>`)}</button>
        <button class="nav-arrow" aria-label="Next page">${box(6, 10, svg`<path d="M0 0v10l6-5z" fill="#c8c6c4"/>`)}</button>
        <button class="page-tab">Page 1</button>
        <button class="add" aria-label="New page">${box(12, 12, svg`<path d="M6 0v12M0 6h12" stroke="#fff" stroke-width="2.600"/>`)}</button>
      </div>
    </div>`;
  }

  private filters() {
    return html`<aside class="pane filters">
      <div class="pane-head">${box(21, 18, svg`<path d="M1 1h19l-7 8v8H8V9z" stroke="#252423" stroke-width="2"/>`)}<h2>Filters</h2>
        <button aria-label="Show filters">${box(17, 12, svg`<path d="M1 7q1-6 7.500-6T16 7" stroke="#252423" stroke-width="1.400"/><circle cx="8.500" cy="7" r="2.500" stroke="#252423" stroke-width="1.500"/>`)}</button>
        <button aria-label="Collapse filters">${chevRight2()}</button></div>
      <label class="f-search">${magnifier()}<input class="field" type="text" placeholder="Search" aria-label="Search filters" /></label>
      <div class="f-list">
        ${["Filters on this page", "Filters on all pages"].map((t) => html`<div class="f-head"><h3>${t}</h3><button aria-label="More options">. . .</button></div><div class="f-drop">Add data fields here</div>`)}
      </div>
    </aside>`;
  }

  private toggle(id: string, label: string, on: boolean, set: (v: boolean) => void, first = false) {
    return html`<div class="row ${first ? "row-first" : ""}"><label for=${id}>${label}</label>
      <div class="switch"><input id=${id} type="checkbox" .checked=${on} @change=${(e: Event) => set((e.target as HTMLInputElement).checked)} /><span class=${on ? "on" : ""}>${on ? "On" : "Off"}</span></div></div>`;
  }

  private viz() {
    return html`<aside class="pane viz">
      <div class="pane-head"><h2>Visualizations</h2><button aria-label="Collapse visualizations">${chevRight2()}</button></div>
      <h3 class="sub">Build visual</h3>
      <div class="modes">
        <button class="mode mode-on" aria-label="Build visual">${box(30, 31, svg`<path d="M0 1h24" stroke="#252423" stroke-width="1.500"/><rect x="1" y="8" width="28" height="8" fill="#117865" stroke="#111" stroke-width="1.600" stroke-dasharray="2.500 1.500"/><rect x="1" y="21" width="28" height="8" fill="#117865" stroke="#111" stroke-width="1.600" stroke-dasharray="2.500 1.500"/>`)}</button>
        <button class="mode" aria-label="Format visual">${box(31, 31, svg`<path d="M7 29.500H1V1h13l8 9v4M13 1v9h9" stroke="#252423" stroke-width="1.500"/><path d="M30 12L18 24l-2-2zM16 22q-4 0-4 4-2 3-4 3 8 2 10-5" fill="#fff" stroke="#252423" stroke-width="1.500"/>`)}</button>
        <span class="notch">${box(19, 10, svg`<path d="M0 9.500L9.500 .5l9.500 9" fill="#f3f2f1"/><path d="M0 9.500h19" stroke="#f3f2f1" stroke-width="1.500"/><path d="M0 9.500L9.500 .7l9.500 8.800" stroke="#8a8886"/>`)}</span>
      </div>
      <div class="gallery">${GALLERY.map(([n, g]) => html`<button aria-label=${n}>${box(24, 24, g)}</button>`)}</div>
      <div class="dots">. . .</div>
      <div class="wells">
        <h3 class="label">Values</h3>
        <div class="well">Add data fields here</div>
        <h3 class="label semi">Drill through</h3>
        ${this.toggle("cross", "Cross-report", this.cross, (v) => (this.cross = v), true)}
        ${this.toggle("keep", "Keep all filters", this.keep, (v) => (this.keep = v))}
        <div class="well well-tight">Add drill-through fields here</div>
      </div>
    </aside>`;
  }

  private data() {
    return html`<aside class="pane data">
      <div class="pane-head"><h2>Data</h2><button aria-label="Collapse data">${chevRight2()}</button></div>
      <label class="d-search">${box(18, 18, svg`<circle cx="10.500" cy="7" r="6" stroke="#605e5c" stroke-width="1.300"/><path d="M6 11.500L1 17" stroke="#605e5c" stroke-width="1.400"/>`)}<input class="field" type="text" placeholder="Search" aria-label="Search data" /></label>
      <ul>${TABLES.map((t) => html`<li><button class="table-row">${box(8, 14, svg`<path d="M1 1l6 6-6 6" stroke="#484644" stroke-width="1.200"/>`)}${box(15, 15, svg`<rect x="1" y="1" width="13" height="13" rx="2" stroke=${K} stroke-width="1.400"/><path d="M1 5h13M1 9.500h13M5 1v13M9.500 1v13" stroke=${K} stroke-width="1.200"/>`)}<span>${t}</span></button></li>`)}</ul>
    </aside>`;
  }

  render() {
    return html`${this.titleBar()}${this.ribbon()}
      <div class="main">${this.rail()}${this.stage()}${this.filters()}${this.viz()}${this.data()}</div>
      <footer class="status"><span>Page 1 of 1</span>
        <div class="zoom"><button aria-label="Zoom out">-</button><input class="zoom-range" type="range" min="0" max="100" value="35" aria-label="Zoom level" /><button aria-label="Zoom in">+</button></div>
        <span class="pct">73%</span>
        <button aria-label="Fit to page">${box(21, 16, svg`<rect x="1" y="1" width="19" height="14" stroke="#605e5c" stroke-width="1.700"/><path d="M4 6V4h3M14 4h3v2M17 10v2h-3M7 12H4v-2" stroke="#605e5c" stroke-width="1.200"/>`)}</button>
        <a class="update" href="#update">Update available (click to download)</a></footer>
      <div class="mark"><div class="mark-ar" lang="ar" dir="rtl">نفـذلي</div><div class="mark-en">nafezly.com</div></div>`;
  }
}
